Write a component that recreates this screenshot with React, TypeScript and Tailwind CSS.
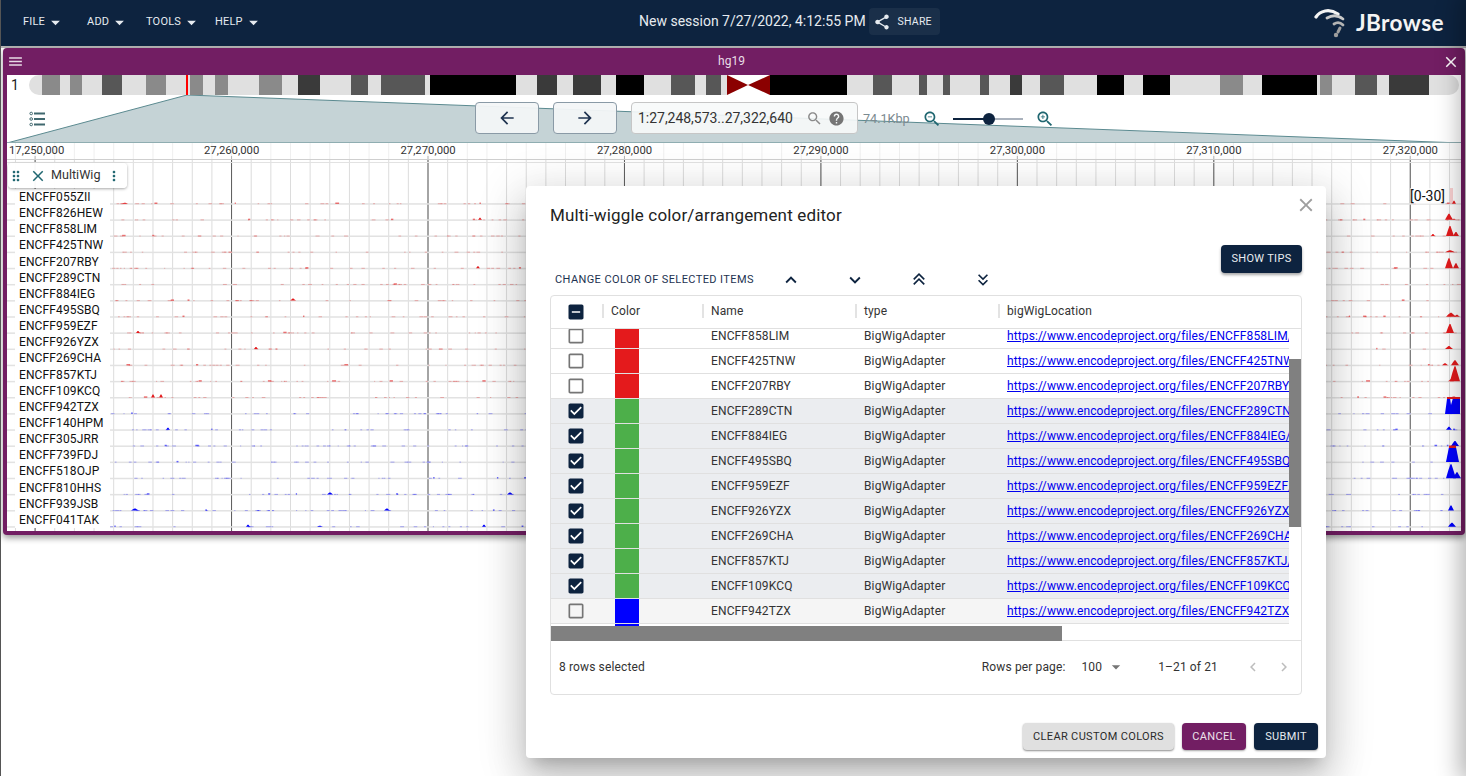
const ICONS = {
  menu: 'M3 18h18v-2H3v2zm0-5h18v-2H3v2zm0-7v2h18V6H3z',
  close: 'M19 6.41 17.59 5 12 10.59 6.41 5 5 6.41 10.59 12 5 17.59 6.41 19 12 13.41 17.59 19 19 17.59 13.41 12z',
  share: 'M18 16.08c-.76 0-1.44.3-1.96.77L8.91 12.7c.05-.23.09-.46.09-.7s-.04-.47-.09-.7l7.05-4.11c.54.5 1.25.81 2.04.81 1.66 0 3-1.34 3-3s-1.34-3-3-3-3 1.34-3 3c0 .24.04.47.09.7L8.04 9.81C7.5 9.31 6.79 9 6 9c-1.66 0-3 1.34-3 3s1.34 3 3 3c.79 0 1.5-.31 2.04-.81l7.12 4.16c-.05.21-.08.43-.08.65 0 1.61 1.31 2.92 2.92 2.92 1.61 0 2.92-1.31 2.92-2.92s-1.31-2.92-2.92-2.92z',
  search: 'M15.5 14h-.79l-.28-.27C15.41 12.59 16 11.11 16 9.5 16 5.91 13.09 3 9.5 3S3 5.91 3 9.5 5.91 16 9.5 16c1.61 0 3.09-.59 4.23-1.57l.27.28v.79l5 4.99L20.49 19l-4.99-5zm-6 0C7.01 14 5 11.99 5 9.5S7.01 5 9.5 5 14 7.01 14 9.5 11.99 14 9.5 14z',
  help: 'M12 2C6.48 2 2 6.48 2 12s4.48 10 10 10 10-4.48 10-10S17.52 2 12 2zm1 17h-2v-2h2v2zm2.07-7.75-.9.92C13.45 12.9 13 13.5 13 15h-2v-.5c0-1.1.45-2.1 1.17-2.83l1.24-1.26c.37-.36.59-.86.59-1.41 0-1.1-.9-2-2-2s-2 .9-2 2H8c0-2.21 1.79-4 4-4s4 1.79 4 4c0 .88-.36 1.68-.93 2.25z',
  zoomOut: 'M15.5 14h-.79l-.28-.27C15.41 12.59 16 11.11 16 9.5 16 5.91 13.09 3 9.5 3S3 5.91 3 9.5 5.91 16 9.5 16c1.61 0 3.09-.59 4.23-1.57l.27.28v.79l5 4.99L20.49 19l-4.99-5zm-6 0C7.01 14 5 11.99 5 9.5S7.01 5 9.5 5 14 7.01 14 9.5 11.99 14 9.5 14zM7 9h5v1H7z',
  zoomIn: 'M15.5 14h-.79l-.28-.27C15.41 12.59 16 11.11 16 9.5 16 5.91 13.09 3 9.5 3S3 5.91 3 9.5 5.91 16 9.5 16c1.61 0 3.09-.59 4.23-1.57l.27.28v.79l5 4.99L20.49 19l-4.99-5zm-6 0C7.01 14 5 11.99 5 9.5S7.01 5 9.5 5 14 7.01 14 9.5 11.99 14 9.5 14zM12 10h-2v2H9v-2H7V9h2V7h1v2h2v1z',
  back: 'M20 11H7.83l5.59-5.59L12 4l-8 8 8 8 1.41-1.41L7.83 13H20v-2z',
  forward: 'm12 4-1.41 1.41L16.17 11H4v2h12.17l-5.58 5.59L12 20l8-8z',
  drag: 'M11 18c0 1.1-.9 2-2 2s-2-.9-2-2 .9-2 2-2 2 .9 2 2zm-2-8c-1.1 0-2 .9-2 2s.9 2 2 2 2-.9 2-2-.9-2-2-2zm0-6c-1.1 0-2 .9-2 2s.9 2 2 2 2-.9 2-2-.9-2-2-2zm6 4c1.1 0 2-.9 2-2s-.9-2-2-2-2 .9-2 2 .9 2 2 2zm0 2c-1.1 0-2 .9-2 2s.9 2 2 2 2-.9 2-2-.9-2-2-2zm0 6c-1.1 0-2 .9-2 2s.9 2 2 2 2-.9 2-2-.9-2-2-2z',
  more: 'M12 8c1.1 0 2-.9 2-2s-.9-2-2-2-2 .9-2 2 .9 2 2 2zm0 2c-1.1 0-2 .9-2 2s.9 2 2 2 2-.9 2-2-.9-2-2-2zm0 6c-1.1 0-2 .9-2 2s.9 2 2 2 2-.9 2-2-.9-2-2-2z',
  caret: 'M7 10l5 5 5-5z',
  up: 'M7.41 15.41 12 10.83l4.59 4.58L18 14l-6-6-6 6z',
  down: 'M7.41 8.59 12 13.17l4.59-4.58L18 10l-6 6-6-6 1.41-1.41z',
  upUp: 'M17.59 18 19 16.59l-7-7-7 7L6.41 18 12 12.42zM17.59 12 19 10.59l-7-7-7 7L6.41 12 12 6.42z',
  downDown: 'M18 6.41 16.59 5 12 9.58 7.41 5 6 6.41l6 6zM18 13l-1.41-1.41L12 16.17l-4.59-4.58L6 13l6 6z',
  prev: 'M15.41 7.41 14 6l-6 6 6 6 1.41-1.41L10.83 12z',
  next: 'M10 6 8.59 7.41 13.17 12l-4.58 4.59L10 18l6-6z',
  blank: 'M19 5v14H5V5h14m0-2H5c-1.1 0-2 .9-2 2v14c0 1.1.9 2 2 2h14c1.1 0 2-.9 2-2V5c0-1.1-.9-2-2-2z',
  checked: 'M19 3H5c-1.11 0-2 .9-2 2v14c0 1.1.89 2 2 2h14c1.11 0 2-.9 2-2V5c0-1.1-.89-2-2-2zm-9 14l-5-5 1.41-1.41L10 14.17l7.59-7.59L19 8l-9 9z',
  partial: 'M19 3H5c-1.1 0-2 .9-2 2v14c0 1.1.9 2 2 2h14c1.1 0 2-.9 2-2V5c0-1.1-.9-2-2-2zm-2 10H7v-2h10v2z',
};

function Icon({ name, className }: { name: keyof typeof ICONS; className: string }) {
  return (
    <svg viewBox="0 0 24 24" fill="currentColor" className={className}>
      <path d={ICONS[name]} />
    </svg>
  );
}

const TRACKS = [
  'ENCFF055ZII', 'ENCFF826HEW', 'ENCFF858LIM', 'ENCFF425TNW', 'ENCFF207RBY', 'ENCFF289CTN', 'ENCFF884IEG',
  'ENCFF495SBQ', 'ENCFF959EZF', 'ENCFF926YZX', 'ENCFF269CHA', 'ENCFF857KTJ', 'ENCFF109KCQ', 'ENCFF942TZX',
  'ENCFF140HPM', 'ENCFF305JRR', 'ENCFF739FDJ', 'ENCFF518OJP', 'ENCFF810HHS', 'ENCFF939JSB', 'ENCFF041TAK',
];

// [x start, x end, fill]
const L = '#e0e0e0';
const G = '#8a8a8a';
const D = '#575757';
const S = '#3a3a3a';
const K = '#000000';
const BANDS: [number, number, string][] = [
  [42, 60, G], [70, 82, G], [102, 122, D], [146, 166, G], [190, 203, G], [215, 228, G], [259, 282, G], [298, 320, S],
  [351, 368, D], [381, 425, D], [430, 516, K], [537, 557, S], [573, 601, S], [616, 644, K], [671, 695, D], [706, 721, D],
  [770, 847, K], [873, 892, D], [919, 927, D], [943, 950, D], [980, 989, D], [1010, 1022, S], [1040, 1064, D],
  [1097, 1124, K], [1143, 1170, K], [1220, 1243, G], [1262, 1317, K], [1320, 1332, G], [1355, 1377, D], [1389, 1429, S],
];

function Ideogram() {
  return (
    <svg viewBox="29 75 1432 20" className="h-full w-[1432px]">
      <defs>
        <clipPath id="chrom">
          <rect x="29" y="75" width="1430" height="20" rx="10" />
        </clipPath>
      </defs>
      <g clipPath="url(#chrom)">
        <rect x="29" y="75" width="1430" height="20" fill={L} />
        {BANDS.map(([a, b, c]) => (
          <rect key={a} x={a} y="75" width={b - a} height="20" fill={c} />
        ))}
        <rect x="727" y="75" width="43" height="20" fill="#fff" />
        <polygon points="727,75 748,85 727,95" fill="#8b0000" />
        <polygon points="770,75 748,85 770,95" fill="#8b0000" />
      </g>
      <rect x="186" y="75" width="2" height="20" fill="#f00" />
    </svg>
  );
}

// small seeded generator so the wiggle noise stays the same between runs
function makeRandom(seed: number) {
  let s = seed;
  return () => {
    s = (s * 16807) % 2147483647;
    return s / 2147483647;
  };
}

const baseline = (i: number) => 203.7 + 16.15 * i;
const trackColor = (i: number) => (i < 13 ? '#e41a1c' : '#0000ff');

// [row, peak x, half width, height]
const PEAKS: [number, number, number, number][] = [
  [0, 1454, 2, 3], [1, 1449, 4, 6], [1, 1454, 2, 1], [2, 1433, 2, 2], [2, 1450, 4, 10], [2, 1456, 3, 4], [3, 1450, 5, 2],
  [4, 1449, 4, 10], [4, 1456, 3, 5], [7, 1451, 5, 4], [7, 1457, 3, 2], [8, 1450, 4, 9], [9, 1449, 4, 3], [10, 1445, 3, 2],
  [10, 1455, 4, 5], [11, 1455, 5, 15], [11, 1451, 3, 2], [14, 1449, 3, 3], [15, 1455, 4, 5], [17, 1451, 5, 14], [17, 1457, 4, 6],
  [19, 1451, 3, 5], [20, 1452, 4, 4], [12, 153, 2, 3], [12, 161, 2, 3], [9, 256, 2, 2], [0, 125, 3, 1], [1, 480, 2, 2],
  [4, 478, 2, 2], [6, 293, 3, 2], [8, 138, 2, 2], [14, 168, 2, 2], [18, 330, 3, 2], [18, 510, 3, 2], [19, 135, 4, 2], [19, 387, 3, 2],
  [20, 484, 2, 2], [20, 320, 3, 1], [20, 248, 2, 2],
];

function Wiggles() {
  const rows = TRACKS.map((_, i) => {
    const rand = makeRandom(1000 + i * 77);
    const bits = [];
    for (let k = 0; k < 110; k++) {
      const x = 110 + rand() * 1350;
      const w = 1 + rand() * 3;
      const strong = rand() > 0.94;
      bits.push(
        <rect
          key={k}
          x={x}
          y={baseline(i) - (strong ? 1.2 : 0.5)}
          width={w}
          height={strong ? 1.5 : 1}
          fill={trackColor(i)}
          opacity={strong ? 0.6 : 0.3}
        />
      );
    }
    return (
      <g key={i}>
        <rect x="7" y={baseline(i) - 0.5} width="1454" height="1.5" fill="#e2e2e2" />
        {bits}
      </g>
    );
  });
  const minor = [];
  for (let k = -1; k < 74; k++) minor.push(34.6 + k * 19.645);
  const major = [0, 1, 2, 3, 4, 5, 6, 7];
  return (
    <svg viewBox="7 143 1454 388" className="absolute inset-0 h-full w-full font-[Roboto,sans-serif]">
      {minor.map(x => (
        <rect key={x} x={x} y="143" width="1" height="388" fill="#dcdcdc" />
      ))}
      {major.map(k => (
        <rect key={k} x={34.6 + k * 196.45} y="156" width="1" height="375" fill="#5c5c5c" />
      ))}
      <rect x="7" y="143" width="1454" height="16" fill="#fff" fillOpacity="0.55" />
      <rect x="7" y="159" width="1454" height="1" fill="#cfcfcf" />
      <rect x="7" y="162" width="1454" height="1" fill="#e2e2e2" />
      {major.map(k => (
        <g key={k}>
          <text x={k === 0 ? 9 : 204 + (k - 1) * 196.45} y="154" fontSize="11.3" fill="#333">
            {k === 0 ? '17,250,000' : `27,${250 + k * 10},000`}
          </text>
        </g>
      ))}
      {rows}
      {PEAKS.map(([i, x, hw, h], n) => (
        <polygon
          key={n}
          points={`${x - hw},${baseline(i)} ${x - hw / 2},${baseline(i) - h * 0.6} ${x - 0.5},${baseline(i) - h} ${x + 0.5},${baseline(i) - h} ${x + hw / 2},${baseline(i) - h * 0.55} ${x + hw},${baseline(i)}`}
          fill={trackColor(i)}
        />
      ))}
      <polygon points="1445,414 1447,399 1450,398 1451,405 1453,398 1460,398 1460,414" fill="#0000ff" />
      <rect x="1447" y="397" width="13" height="2" fill="#e41a1c" />
      <polygon points="1446,462 1449,447 1456,447 1459,462" fill="#0000ff" />
      <rect x="1449" y="445.5" width="7" height="2.5" fill="#e41a1c" />
      <rect x="1450" y="188" width="3" height="16" fill="#e41a1c" opacity="0.2" />
    </svg>
  );
}

function ViewPanel() {
  return (
    <div className="mx-[3px] mt-[2px] h-[487px] w-[1462px] rounded-[4px] bg-[#721E63] px-1 pb-1 shadow-[0_3px_6px_rgba(0,0,0,0.4)]">
      <div className="flex h-[27px] items-center justify-between text-[12px] text-white">
        <Icon name="menu" className="h-[17px] w-[17px] text-[#e8dbe6]" />
        <span className="-ml-[3px] -mt-[1px] text-[#e9dde7]">hg19</span>
        <Icon name="close" className="mr-[1px] h-[18px] w-[18px]" />
      </div>
      <div className="bg-white">
        <div className="flex h-5 items-center">
          <span className="w-[22px] pl-[4px] text-[14px] leading-none text-[#222]">1</span>
          <Ideogram />
        </div>
        <div className="relative h-[48px]">
          <svg viewBox="7 95 1454 48" className="absolute inset-0 h-full w-full">
            <polygon points="7,143 187,95 1461,143" fill="#c5d3d6" />
            <polyline points="7,143 187,95 1461,143" fill="none" stroke="#5b8a90" strokeWidth="1" />
            <rect x="7" y="142" width="1454" height="1" fill="#8fadb1" />
          </svg>
          <div className="relative flex h-full items-start pt-[7px]">
            <svg viewBox="0 0 20 16" className="ml-[22px] mt-[9px] h-4 w-5 text-[#40686f]" fill="none" stroke="currentColor">
              <circle cx="2.2" cy="2.5" r="1.3" />
              <circle cx="2.2" cy="8" r="1.3" />
              <circle cx="2.2" cy="13.5" r="1.3" />
              <path d="M5 2.5h11M5 8h11M5 13.5h11" strokeWidth="1.8" />
            </svg>
            <button className="ml-[426px] flex h-8 w-16 items-center justify-center rounded-[4px] border border-[#8a9aa6] bg-[#f3f6f7]/95 text-[#1f3350]">
              <Icon name="back" className="h-5 w-5" />
            </button>
            <button className="ml-[14px] flex h-8 w-16 items-center justify-center rounded-[4px] border border-[#8a9aa6] bg-[#f3f6f7]/95 text-[#1f3350]">
              <Icon name="forward" className="h-5 w-5" />
            </button>
            <div className="ml-[14px] flex h-8 w-[227px] items-center rounded-[4px] border border-[#c6c6c6] bg-[#f7f9f9]/90 pl-[6px]">
              <span className="text-[14px] tracking-[-0.03px] text-[#333]">1:27,248,573..27,322,640</span>
              <Icon name="search" className="ml-[13px] h-[17px] w-[17px] text-[#8a8a8a]" />
              <Icon name="help" className="ml-[5px] h-[17px] w-[17px] text-[#757575]" />
            </div>
            <span className="ml-[5px] mt-[9px] w-[47px] whitespace-nowrap text-[12.6px] leading-4 text-[#7b8a90]">74.1Kbp</span>
            <Icon name="zoomOut" className="ml-[12px] mt-[7px] h-5 w-5 text-[#1f6670]" />
            <div className="relative ml-[11px] mt-[16px] h-[2px] w-[70px] bg-[#aab2bd]">
              <div className="h-[2px] w-[36px] bg-[#0D233F]" />
              <div className="absolute left-[30px] top-[-5px] h-3 w-3 rounded-full bg-[#0D233F]" />
            </div>
            <Icon name="zoomIn" className="ml-[12px] mt-[7px] h-5 w-5 text-[#1f6670]" />
          </div>
        </div>
        <div className="relative h-[388px] overflow-hidden">
          <Wiggles />
          <div className="absolute left-[1px] top-[20px] z-10 flex h-[25px] w-[119px] items-center rounded-[4px] bg-white/95 shadow-[0_1px_3px_rgba(0,0,0,0.35)]">
            <Icon name="drag" className="h-4 w-4 text-[#1f6670]" />
            <Icon name="close" className="ml-[5px] h-[18px] w-[18px] text-[#1f6670]" />
            <span className="ml-[4px] text-[12.6px] text-[#333]">MultiWig</span>
            <Icon name="more" className="ml-[5px] h-4 w-4 text-[#1f6670]" />
          </div>
          <div className="relative ml-2 mt-[46px] flex w-[95px] flex-col bg-white pl-1">
            {TRACKS.map(t => (
              <div key={t} className="h-[16.15px] text-[12px] leading-[16px] tracking-[0.12px] text-[#111]">
                {t}
              </div>
            ))}
          </div>
          <span className="absolute right-[16px] top-[45px] bg-white/60 text-[14px] leading-4 text-[#111]">[0-30]</span>
        </div>
      </div>
    </div>
  );
}

function Header() {
  const menus: [string, string][] = [
    ['FILE', 'w-[64px]'],
    ['ADD', 'w-[59px]'],
    ['TOOLS', 'w-[69px]'],
    ['HELP', 'w-[60px]'],
  ];
  return (
    <div className="relative flex h-[46px] items-center bg-[#0D233F] text-[#e6ebf0]">
      <div className="-mt-[2px] ml-[23px] flex">
        {menus.map(([m, w]) => (
          <div key={m} className={`flex items-center text-[11px] tracking-[0.2px] ${w}`}>
            {m}
            <Icon name="caret" className="h-[21px] w-[21px]" />
          </div>
        ))}
      </div>
      <span className="-mt-[4px] ml-[364px] text-[14px] text-[#e6ebf0]">New session 7/27/2022, 4:12:55 PM</span>
      <div className="-mt-[1px] ml-[3px] flex h-[27px] w-[71px] -translate-y-[1px] items-center rounded-[4px] bg-[#1a2f49] pl-[4px]">
        <Icon name="share" className="h-[18px] w-[18px]" />
        <span className="ml-[7px] text-[10.5px] tracking-[0.2px]">SHARE</span>
      </div>
      <div className="ml-auto mr-[22px] flex items-center">
        <svg viewBox="1314 6 32 34" className="h-[34px] w-[32px]" fill="none" strokeLinecap="round">
          <path d="M1316 17C1320 11 1329 8 1338 14" stroke="#f4f4f4" strokeWidth="3.2" />
          <path d="M1327 18C1332 15 1338 15 1343 19" stroke="#c9c9c9" strokeWidth="2.8" />
          <path d="M1334 24C1337 22 1340 22 1343 25" stroke="#b3b3b3" strokeWidth="2.8" />
          <path d="M1340 28L1338 32" stroke="#9e9e9e" strokeWidth="3" />
          <circle cx="1336" cy="35" r="2.2" fill="#9e9e9e" />
        </svg>
        <span className="ml-[10px] font-[Lato,sans-serif] text-[22.6px] font-bold leading-none tracking-[0.4px] text-[#f4f4f4]">JBrowse</span>
      </div>
    </div>
  );
}

function Checkbox({ kind }: { kind: 'blank' | 'checked' | 'partial' }) {
  return (
    <span className="relative block h-5 w-5">
      {kind !== 'blank' && <span className="absolute inset-[5px] bg-white" />}
      <Icon
        name={kind}
        className={`absolute inset-0 h-5 w-5 ${kind === 'blank' ? 'text-[#757575]' : 'text-[#0D233F]'}`}
      />
    </span>
  );
}

function ColumnHead({ label }: { label: string }) {
  return (
    <div className="relative flex items-center pb-[2px] pl-2 text-[#333]">
      <span className="absolute left-[-1px] h-[14px] w-[2px] bg-[#e3e3e3]" />
      {label}
    </div>
  );
}

function EditorTable() {
  const rows = TRACKS.slice(2, 15);
  return (
    <div className="h-[400px] rounded-[4px] border border-[#e0e0e0] text-[12px] tracking-[0.13px]">
      <div className="grid h-[33px] grid-cols-[52px_100px_153px_143px_1fr] border-b border-[#e0e0e0]">
        <div className="flex items-center justify-center pr-[2px]">
          <Checkbox kind="partial" />
        </div>
        <ColumnHead label="Color" />
        <ColumnHead label="Name" />
        <ColumnHead label="type" />
        <ColumnHead label="bigWigLocation" />
      </div>
      <div className="relative h-[297px] overflow-hidden">
        <div className="-mt-[5px] w-[738px]">
          {rows.map((t, i) => {
            const selected = i >= 3 && i <= 10;
            const color = i < 3 ? 'bg-[#e41a1c]' : i <= 10 ? 'bg-[#4daf4a]' : 'bg-[#0000ff]';
            const bg = selected ? 'bg-[#ebedf0]' : i === 11 ? 'bg-[#f5f5f5]' : 'bg-white';
            return (
              <div key={t} className={`grid h-[25px] grid-cols-[52px_100px_153px_143px_290px] border-b border-[#e0e0e0] ${bg}`}>
                <div className="flex items-center justify-center pr-[2px]">
                  <Checkbox kind={selected ? 'checked' : 'blank'} />
                </div>
                <div className="pl-3">
                  <div className={`h-6 w-6 ${color}`} />
                </div>
                <div className="pl-2 leading-6 text-[#333]">{t}</div>
                <div className="pl-2 leading-6 text-[#333]">BigWigAdapter</div>
                <div className="overflow-hidden whitespace-nowrap pl-2 leading-6 text-[#0000ee] underline">
                  {`https://www.encodeproject.org/files/${t}/@@download/${t}.bigWig`}
                </div>
              </div>
            );
          })}
        </div>
        <div className="absolute right-0 top-[30px] h-[168px] w-3 bg-[#808080]" />
      </div>
      <div className="h-[15px] border-b border-[#e0e0e0]">
        <div className="h-[15px] w-[511px] bg-[#808080]" />
      </div>
      <div className="flex h-[52px] items-center pl-2 text-[#333]">
        <span>8 rows selected</span>
        <span className="ml-[337px]">Rows per page:</span>
        <span className="ml-[16px]">100</span>
        <Icon name="caret" className="ml-[4px] h-5 w-5 text-[#757575]" />
        <span className="ml-[32px]">1–21 of 21</span>
        <Icon name="prev" className="ml-[26px] h-[18px] w-[18px] text-[#bdbdbd]" />
        <Icon name="next" className="ml-[13px] h-[18px] w-[18px] text-[#bdbdbd]" />
      </div>
    </div>
  );
}

function EditorDialog() {
  return (
    <div className="absolute left-[526px] top-[186px] z-20 h-[572px] w-[800px] rounded-[4px] bg-white shadow-[0_11px_15px_-7px_rgba(0,0,0,0.2),0_24px_38px_3px_rgba(0,0,0,0.14),0_9px_46px_8px_rgba(0,0,0,0.12)]">
      <Icon name="close" className="absolute right-[9px] top-[8px] h-[22px] w-[22px] text-[#9e9e9e]" />
      <div className="flex h-[59px] items-center px-6 text-[17px] tracking-[0.17px] text-[#222]">
        Multi-wiggle color/arrangement editor
      </div>
      <div className="px-6">
        <div className="flex justify-end">
          <button className="h-7 w-[81px] rounded-[4px] bg-[#0D233F] text-[11px] tracking-[0.3px] text-[#e9edf1] shadow-[0_2px_3px_rgba(0,0,0,0.35)]">
            SHOW TIPS
          </button>
        </div>
        <div className="mb-[8px] flex h-[14px] items-center text-[#0D233F]">
          <span className="w-[209px] whitespace-nowrap pl-[5px] pt-[1px] text-[11px] tracking-[0.4px] text-[#1d3250]">CHANGE COLOR OF SELECTED ITEMS</span>
          <span className="flex w-16 justify-center"><Icon name="up" className="h-[22px] w-[22px]" /></span>
          <span className="flex w-16 justify-center"><Icon name="down" className="h-[22px] w-[22px]" /></span>
          <span className="flex w-16 justify-center"><Icon name="upUp" className="h-5 w-5" /></span>
          <span className="flex w-16 justify-center"><Icon name="downDown" className="h-5 w-5" /></span>
        </div>
        <EditorTable />
      </div>
      <div className="mt-[28px] flex justify-end gap-2 pr-2 text-[11px] tracking-[0.35px]">
        <button className="h-[27px] w-[151px] rounded-[4px] bg-[#e0e0e0] pt-[1px] text-[#2b2b2b] shadow-[0_1px_2px_rgba(0,0,0,0.45)]">CLEAR CUSTOM COLORS</button>
        <button className="h-[27px] w-16 rounded-[4px] bg-[#721E63] pt-[1px] text-[#ece0ea] shadow-[0_1px_2px_rgba(0,0,0,0.35)]">CANCEL</button>
        <button className="h-[27px] w-16 rounded-[4px] bg-[#0D233F] pt-[1px] text-[#e6ebf0] shadow-[0_1px_2px_rgba(0,0,0,0.35)]">SUBMIT</button>
      </div>
    </div>
  );
}

export default function App() {
  return (
    <div className="relative h-[776px] w-[1466px] overflow-hidden bg-white font-[Roboto,sans-serif]">
      <Header />
      <div className="-mb-[2px] h-[2px] bg-[#b5b5b5]" />
      <ViewPanel />
      <EditorDialog />
      {/* something off screen to the right throws a shadow over the edge */}
      <div className="absolute left-[1466px] top-0 z-30 h-full w-10 shadow-[0_0_24px_6px_rgba(0,0,0,0.3)]" />
      <div className="absolute left-0 top-0 z-30 h-full w-px bg-[#555]" />
    </div>
  );
}
